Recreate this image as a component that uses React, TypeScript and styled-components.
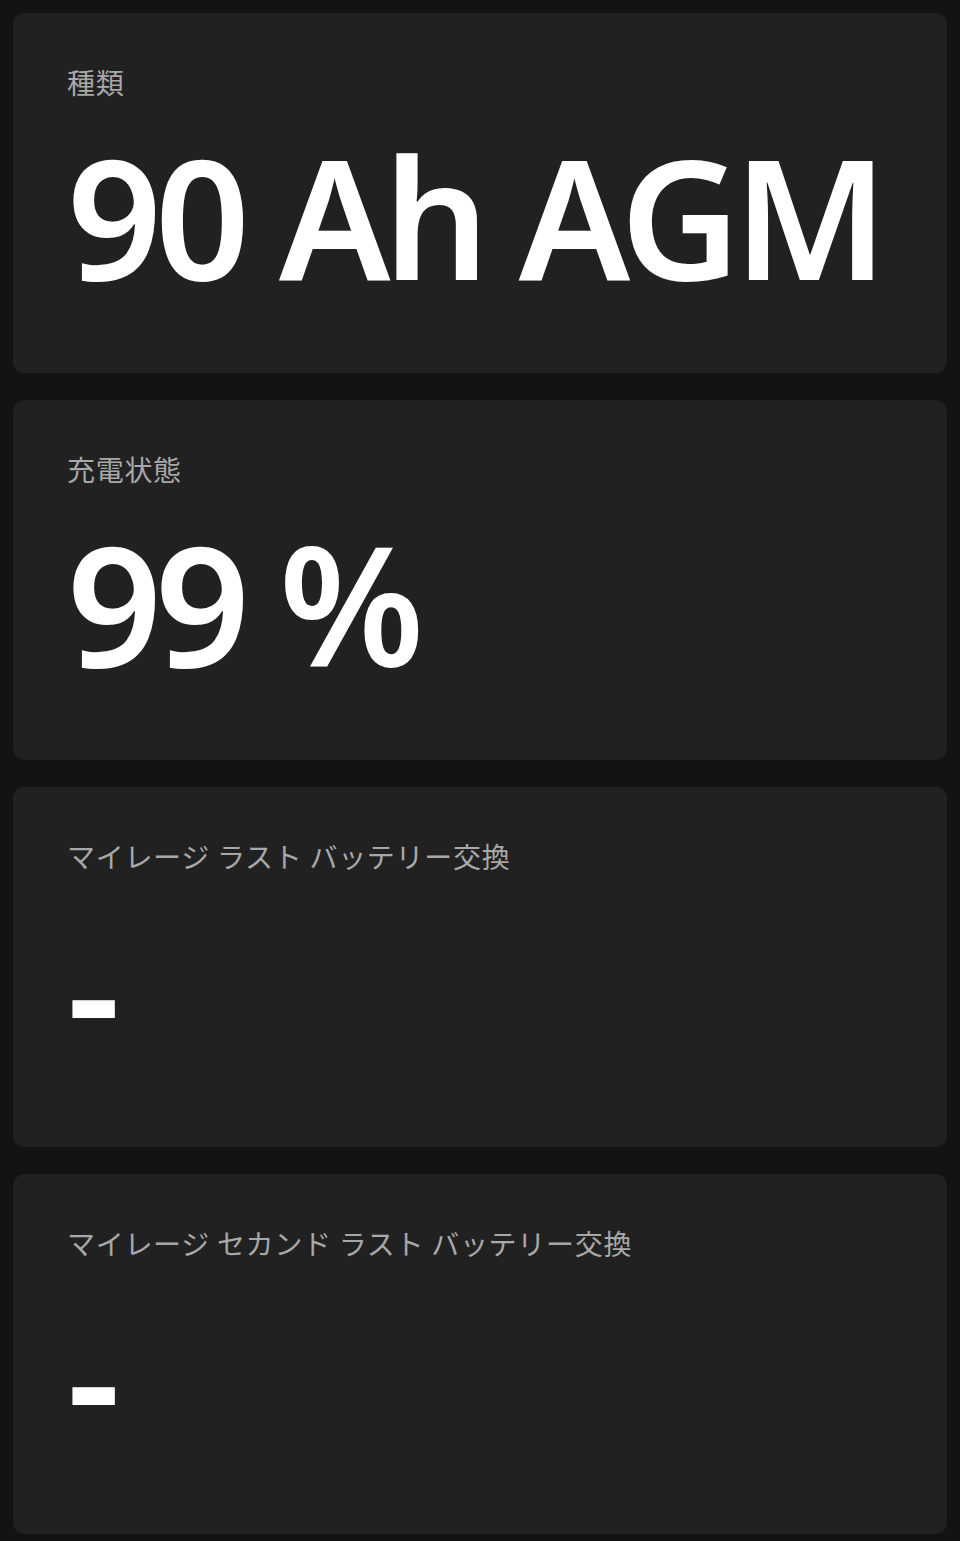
import { createGlobalStyle } from 'styled-components'
import styled from 'styled-components'

const GlobalStyle = createGlobalStyle`
  html, body {
    margin: 0;
    padding: 0;
    background-color: #131313;
  }
  body {
    font-family: "Noto Sans", "Noto Sans CJK JP", sans-serif;
    color: #ffffff;
  }
`

interface StatCardProps {
  label: string
  value: string
}

function StatCard({ label, value }: StatCardProps) {
  return (
    <Card>
      <Label>{label}</Label>
      <Value>{value}</Value>
    </Card>
  )
}

const items: StatCardProps[] = [
  { label: '種類', value: '90 Ah AGM' },
  { label: '充電状態', value: '99 %' },
  { label: 'マイレージ ラスト バッテリー交換', value: '-' },
  { label: 'マイレージ セカンド ラスト バッテリー交換', value: '-' },
]

export default function App() {
  return (
    <>
      <GlobalStyle />
      <Page>
        {items.map(item => (
          <StatCard key={item.label} label={item.label} value={item.value} />
        ))}
      </Page>
    </>
  )
}

const Page = styled.main`
  display: flex;
  flex-direction: column;
  gap: 27px;
  padding: 13px 13px 6px;
`

const Card = styled.section`
  background-color: #212121;
  border-radius: 12px;
  box-sizing: border-box;
  display: flex;
  flex-direction: column;
  height: 360px;
  overflow: hidden;
  padding: 49px 54px 0;
`

const Label = styled.h3`
  color: #a8a8a8;
  font-family: "Noto Sans CJK JP", "Noto Sans", sans-serif;
  font-size: 28px;
  font-weight: 400;
  letter-spacing: 0.7px;
  line-height: normal;
  margin: 0;
`

const Value = styled.div`
  color: #ffffff;
  font-family: "Noto Sans", sans-serif;
  font-size: 166px;
  font-weight: 600;
  letter-spacing: -7px;
  line-height: normal;
  margin: 1px 0 0;
  white-space: nowrap;
`
